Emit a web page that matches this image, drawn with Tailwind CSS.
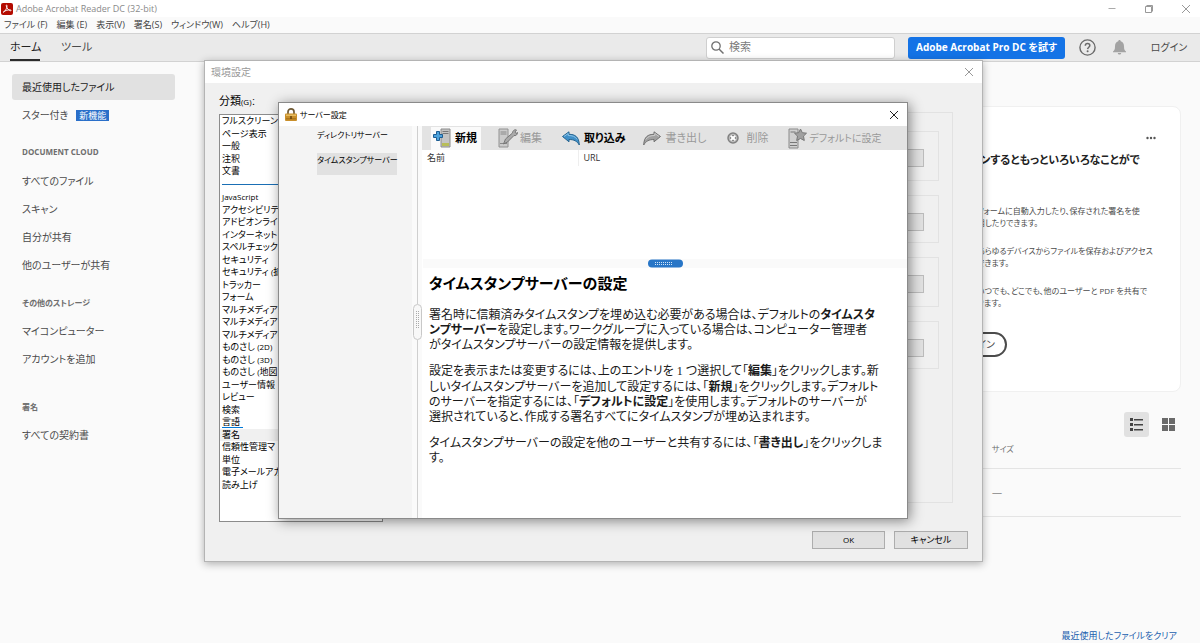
<!DOCTYPE html>
<html lang="ja">
<head>
<meta charset="utf-8">
<meta name="viewport" content="width=device-width, initial-scale=1">
<title>Adobe Acrobat Reader DC (32-bit)</title>
<script src="https://cdn.jsdelivr.net/npm/@tailwindcss/browser@4"></script>
</head>
<body class="relative flex h-screen flex-col overflow-hidden bg-[#fafafa] font-['Open_Sans','Noto_Sans_CJK_JP',sans-serif] text-[10px] whitespace-nowrap text-[#4b4b4b] [font-feature-settings:'palt']">

<!-- Title bar -->
<header class="flex h-[17px] shrink-0 items-center bg-white text-[9px] text-[#8a8a8a]">
  <svg class="ml-px h-3 w-3" viewBox="0 0 12 12" aria-hidden="true"><rect width="12" height="12" rx="2" fill="#b30b00"/><path d="M2.2 9.2C3.2 9.6 6.4 5 6 2.6c-.2-1-1-.6-.8.2C5.600 5 8 7.800 9.600 7.800c1 0 .6-1-.6-1C7 6.800 3 7.800 2.200 9.200Z" fill="none" stroke="#fff" stroke-width=".9"/></svg>
  <span class="ml-[3px] flex-1">Adobe Acrobat Reader DC (32-bit)</span>
  <button class="flex h-full w-7 items-center justify-center" aria-label="最小化"><svg class="h-2 w-2" viewBox="0 0 8 8"><path d="M.5 3.500h7" stroke="#aaa"/></svg></button>
  <button class="flex h-full w-[46px] items-center justify-center" aria-label="元に戻す"><svg class="h-2 w-2" viewBox="0 0 8 8"><path d="M.5 1.500h6v6h-6zM1.500 .5h6v6" fill="none" stroke="#999"/></svg></button>
  <button class="flex h-full w-7 items-center justify-center" aria-label="閉じる"><svg class="h-2 w-2" viewBox="0 0 8 8"><path d="M0 0l8 8M8 0L0 8" stroke="#999"/></svg></button>
</header>

<!-- Menu bar -->
<nav class="flex h-4 shrink-0 items-center gap-[9px] bg-[#fafafa] pl-1 text-[9px] text-[#444]" aria-label="メニュー">
  <button>ファイル (F)</button><button>編集 (E)</button><button>表示(V)</button><button>署名(S)</button><button>ウィンドウ(W)</button><button>ヘルプ(H)</button>
</nav>

<!-- Application toolbar -->
<div class="flex h-[29px] shrink-0 items-center border-y border-[#d2d2d2] bg-[#eaeaea] pl-[10px] text-[11px]">
  <button class="h-full w-[30px] border-b-2 border-[#2c2c2c] pt-[2px] text-[#222]">ホーム</button>
  <button class="ml-[21px] h-full w-[30px]">ツール</button>
  <label class="ml-auto flex h-[22px] w-[189px] items-center rounded-[3px] border border-[#cfcfcf] bg-white pl-1">
    <svg class="h-[13px] w-[13px] shrink-0" viewBox="0 0 13 13" aria-hidden="true"><circle cx="5" cy="5" r="4.200" fill="none" stroke="#707070" stroke-width="1.300"/><path d="M8 8l4.500 4.500" stroke="#707070" stroke-width="1.500"/></svg>
    <input class="ml-[5px] w-full min-w-0 bg-transparent text-[11px] outline-none placeholder:text-[#7b7b7b]" type="text" placeholder="検索" aria-label="検索">
  </label>
  <button class="ml-[13px] h-[22px] w-[157px] rounded-[3px] bg-[#1473e6] text-[10px] font-bold text-white">Adobe Acrobat Pro DC を試す</button>
  <button class="ml-[14px]" aria-label="ヘルプ"><svg class="h-[17px] w-[17px]" viewBox="0 0 17 17"><circle cx="8.500" cy="8.500" r="7.600" fill="none" stroke="#6a6a6a" stroke-width="1.400"/><path d="M6.300 6.700c0-3 4.500-2.800 4.500-.2 0 1.700-2.100 1.700-2.200 3.600" fill="none" stroke="#6a6a6a" stroke-width="1.500"/><circle cx="8.600" cy="12.300" r="1" fill="#6a6a6a"/></svg></button>
  <button class="ml-[17px]" aria-label="通知"><svg class="h-[15px] w-[13px]" viewBox="0 0 13 15"><path d="M6.500 0c.8 0 1.200.6 1.200 1.300 2.500.7 3.300 2.700 3.300 5.200 0 3 .7 3.800 2 5v.8H0v-.8c1.300-1.200 2-2 2-5 0-2.500.8-4.500 3.300-5.200C5.300.6 5.700 0 6.500 0ZM4.800 13h3.400c-.2 2-3.200 2-3.400 0Z" fill="#a3a3a3"/></svg></button>
  <button class="mr-3 ml-6 w-[38px] text-[10px]">ログイン</button>
</div>

<div class="flex min-h-0 flex-1">
  <!-- Sidebar -->
  <nav class="w-[195px] shrink-0 pt-3 pl-3" aria-label="ホーム">
    <a href="#" class="flex h-[26px] w-[163px] items-center rounded-[3px] bg-[#e1e1e1] pl-[10px] text-[#222]">最近使用したファイル</a>
    <a href="#" class="mt-px flex h-7 items-center pl-[10px]">スター付き<span class="ml-2 w-[33px] bg-[#2a6fc9] text-center text-[9px] leading-[11px] text-white">新機能</span></a>
    <h2 class="mt-[9px] mb-px flex h-7 items-center pl-[10px] text-[8px] font-bold text-[#6e6e6e]">DOCUMENT CLOUD</h2>
    <a href="#" class="flex h-7 items-center pl-[10px]">すべてのファイル</a>
    <a href="#" class="flex h-7 items-center pl-[10px]">スキャン</a>
    <a href="#" class="flex h-7 items-center pl-[10px]">自分が共有</a>
    <a href="#" class="flex h-7 items-center pl-[10px]">他のユーザーが共有</a>
    <h2 class="mt-[10px] flex h-7 items-center pl-[10px] text-[8px] font-bold text-[#6e6e6e]">その他のストレージ</h2>
    <a href="#" class="flex h-7 items-center pl-[10px]">マイコンピューター</a>
    <a href="#" class="flex h-7 items-center pl-[10px]">アカウントを追加</a>
    <h2 class="mt-5 flex h-7 items-center pl-[10px] text-[8px] font-bold text-[#6e6e6e]">署名</h2>
    <a href="#" class="flex h-7 items-center pl-[10px]">すべての契約書</a>
  </nav>

  <!-- Home content -->
  <main class="flex min-w-0 flex-1 flex-col items-end pt-[44px] pr-[19px] pl-5">
    <section class="flex h-[286px] w-full shrink-0 justify-end rounded-lg border border-[#f0f0f0] bg-white pt-[27px]">
      <div class="flex w-[240px] flex-col">
        <button class="mr-[23px] self-end" aria-label="その他"><svg class="h-2 w-[12px]" viewBox="0 0 12 8"><g fill="#555"><circle cx="2.500" cy="4" r="1.200"/><circle cx="6" cy="4" r="1.200"/><circle cx="9.500" cy="4" r="1.200"/></g></svg></button>
        <h2 class="mt-2 text-[11px] leading-5 font-bold text-[#222]">サインインするともっといろいろなことがで<br>きます。</h2>
        <div class="ml-[37px] flex flex-col gap-4 pt-[15px] text-[8px] leading-3">
          <p>フォームに自動入力したり、保存された署名を使<br>用したりできます。</p>
          <p>あらゆるデバイスからファイルを保存およびアクセス<br>できます。</p>
          <p>いつでも、どこでも、他のユーザーと PDF を共有で<br>きます。</p>
        </div>
        <button class="mt-[23px] h-[25px] w-[67px] rounded-full border-2 border-[#4b4b4b] pr-[10px] text-right text-[10px]">サインイン</button>
      </div>
    </section>
    <div class="mt-5 flex items-center gap-[13px] pr-[6px]">
      <button class="flex h-[25px] w-[25px] items-center justify-center rounded-[3px] bg-[#e1e1e1]" aria-label="リスト表示"><svg class="h-[13px] w-[13px]" viewBox="0 0 13 13"><path d="M0 0h3v3H0zM0 5h3v3H0zM0 10h3v3H0zM4 1h9v1.500H4zM4 6h9v1.500H4zM4 11h9v1.500H4z" fill="#444"/></svg></button>
      <button aria-label="サムネール表示"><svg class="h-[13px] w-[13px]" viewBox="0 0 13 13"><path d="M0 0h6v6H0zM7 0h6v6H7zM0 7h6v6H0zM7 7h6v6H7z" fill="#6a6a6a"/></svg></button>
    </div>
    <table class="w-full border-collapse text-left text-[8px] text-[#6e6e6e]">
      <thead><tr class="h-[31px] border-b border-[#e4e4e4]"><th class="w-full"></th><th class="min-w-[189px] pb-[6px] font-normal">サイズ</th></tr></thead>
      <tbody><tr class="h-[48px] border-b border-[#e4e4e4]"><td></td><td class="text-[10px] text-[#999]">—</td></tr></tbody>
    </table>
    <a href="#" class="mt-auto mr-1 text-[9px] leading-[15px] text-[#1b5fae]">最近使用したファイルをクリア</a>
  </main>
</div>

<!-- Preferences window -->
<section role="dialog" aria-labelledby="prefs-title" class="absolute top-[60px] left-[204px] flex h-[502px] w-[779px] flex-col border border-[#b4b4b4] bg-[#f0f0f0] text-black shadow-[0_2px_8px_rgba(0,0,0,0.3)]">
  <div class="flex h-[22px] shrink-0 items-center justify-between bg-white pr-[9px] pl-[6px]">
    <h1 id="prefs-title" class="text-[10px] text-[#999]">環境設定</h1>
    <button aria-label="閉じる"><svg class="h-2 w-2" viewBox="0 0 8 8"><path d="M0 0l8 8M8 0L0 8" stroke="#999"/></svg></button>
  </div>
  <div class="flex min-h-0 flex-1 justify-between pt-[10px] pr-[29px] pl-[14px]">
    <div>
      <h2 id="category" class="h-[21px] text-[11px] leading-4">分類<span class="text-[8px]">(G)：</span></h2>
      <div role="listbox" aria-labelledby="category" class="h-[408px] w-[164px] overflow-hidden border border-[#8c8c8c] bg-white text-[9px] leading-3">
        <ul class="grid h-[63px] auto-rows-fr pl-[2px]">
          <li>フルスクリーンモ</li><li>ページ表示</li><li>一般</li><li>注釈</li><li>文書</li>
        </ul>
        <div class="mt-[6px] ml-[2px] h-px bg-[#1a6fb5]"></div>
        <ul class="mt-[6px] grid h-[300px] auto-rows-fr [&>li]:pl-[2px]">
          <li class="text-[8px]">JavaScript</li><li>アクセシビリティ</li><li>アドビオンライン</li><li>インターネット</li><li>スペルチェック</li><li>セキュリティ</li><li>セキュリティ <span class="text-[8px]">(</span>拡</li><li>トラッカー</li><li>フォーム</li><li>マルチメディア <span class="text-[8px]">(</span></li><li>マルチメディアと</li><li>マルチメディアの</li>
          <li>ものさし <span class="text-[8px]">(2D)</span></li><li>ものさし <span class="text-[8px]">(3D)</span></li><li>ものさし <span class="text-[8px]">(</span>地図</li><li>ユーザー情報</li><li>レビュー</li><li>検索</li><li><span class="block h-3 w-[21px] border-b border-[#0078d7]">言語</span></li><li class="bg-[#f0f0f0]">署名</li><li>信頼性管理マ</li><li>単位</li><li>電子メールアカ</li><li>読み上げ</li>
        </ul>
      </div>
    </div>
    <div class="mt-[19px] flex h-[391px] w-[540px] flex-col gap-[14px] border border-[#e2e2e2] px-[13px] pt-[18px]">
      <div class="flex h-[50px] items-center justify-end border border-[#e2e2e2] pt-[3px] pr-[14px]"><button class="h-[18px] w-[70px] border border-[#bcbcbc] bg-[#e1e1e1]" aria-label="詳細"></button></div>
      <div class="flex h-12 items-center justify-end border border-[#e2e2e2] pt-[5px] pr-[14px]"><button class="h-[18px] w-[70px] border border-[#bcbcbc] bg-[#e1e1e1]" aria-label="詳細"></button></div>
      <div class="flex h-[50px] items-center justify-end border border-[#e2e2e2] pt-[3px] pr-[14px]"><button class="h-[18px] w-[70px] border border-[#bcbcbc] bg-[#e1e1e1]" aria-label="詳細"></button></div>
      <div class="flex h-12 items-center justify-end border border-[#e2e2e2] pt-[5px] pr-[14px]"><button class="h-[18px] w-[70px] border border-[#bcbcbc] bg-[#e1e1e1]" aria-label="詳細"></button></div>
    </div>
  </div>
  <div class="flex shrink-0 justify-end gap-[9px] pr-[14px] pb-3">
    <button class="h-[18px] w-[73px] border border-[#adadad] bg-[#e1e1e1] text-[8px] leading-4">OK</button>
    <button class="h-[18px] w-[74px] border border-[#adadad] bg-[#e1e1e1] text-[9px] leading-4">キャンセル</button>
  </div>
</section>

<!-- Server settings window -->
<section role="dialog" aria-labelledby="server-title" class="absolute top-[102px] left-[278px] flex h-[417px] w-[630px] flex-col border border-[#8a8a8a] bg-white text-black shadow-[2px_2px_12px_rgba(0,0,0,0.45)]">
  <div class="flex h-[23px] shrink-0 items-center pr-[9px] pl-[6px]">
    <svg class="h-[13px] w-3" viewBox="0 0 12 13" aria-hidden="true"><path d="M3 6V3.700C3 0 9 0 9 3.700V6" fill="none" stroke="#6f5a36" stroke-width="1.700"/><rect y="5.500" width="12" height="7.500" rx="1" fill="#c98f2b"/><path d="M1 6.500h10v1.500H1z" fill="#e7bd62"/><path d="M1 10.800h10" stroke="#a06d18"/><path d="M5.300 8h1.400v3H5.300z" fill="#5d3d0a"/></svg>
    <h1 id="server-title" class="ml-[3px] flex-1 text-[8px]">サーバー設定</h1>
    <button aria-label="閉じる"><svg class="h-2 w-2" viewBox="0 0 8 8"><path d="M0 0l8 8M8 0L0 8" stroke="#222"/></svg></button>
  </div>
  <div class="flex min-h-0 flex-1">
    <ul class="w-[133px] shrink-0 bg-[#f4f4f4] pl-[38px] text-[8px]">
      <li class="h-[27px] leading-[18px]">ディレクトリサーバー</li>
      <li class="h-[22px] w-[80px] bg-[#e1e1e1] leading-[14px]">タイムスタンプサーバー</li>
    </ul>
    <div class="flex w-[10px] shrink-0 flex-col items-center bg-[#fafafa]" role="separator">
      <div class="h-[178px] w-px bg-[#cfcfcf]"></div>
      <svg class="h-9 w-[9px]" viewBox="0 0 9 36" aria-hidden="true"><rect x=".5" y=".5" width="8" height="35" rx="4" fill="#f8f8f8" stroke="#c8c8c8"/><path d="M3.500 7v18M5.500 7v18" stroke="#aaa" stroke-dasharray="1 1"/></svg>
      <div class="w-px flex-1 bg-[#cfcfcf]"></div>
    </div>
    <div class="flex min-w-0 flex-1 flex-col">
      <div class="flex h-6 shrink-0 items-center bg-[#e3e3e3] pl-[9px] text-[11px] leading-6 text-[#999]" role="toolbar">
        <button class="flex h-[23px] w-[50px] items-center gap-1 bg-[#fafafa] pl-[2px] font-bold text-black">
          <svg class="h-5 w-[18px] shrink-0" viewBox="0 0 18 20"><path d="M8 1h9v18H8z" fill="#c4c4c4" stroke="#8a8a8a"/><path d="M9.500 3.500h6M9.500 5.500h6" stroke="#777"/><path d="M9 15h7v3H9z" fill="#b8bd58"/><path d="M3.500 3.500h3v3h3v3h-3v3h-3v-3h-3v-3h3z" fill="#4da3dc" stroke="#1d5c92"/></svg>新規</button>
        <button class="ml-[17px] flex h-full items-center gap-[2px]" disabled>
          <svg class="h-5 w-5 shrink-0" viewBox="0 0 20 20"><path d="M1 1h9v18H1z" fill="#cbcbcb" stroke="#929292"/><path d="M2.500 4h6M2.500 6h6M2 15.500h7" stroke="#888"/><path d="M5.500 16l2-5 7-6c0-2 2-4 4-3l-1.500 2 1 1.500 1.500-1c0 2.500-2 3.500-3.500 3L9.500 14z" fill="#aaa" stroke="#777"/></svg>編集</button>
        <button class="ml-5 flex h-full items-center gap-1 font-bold text-black">
          <svg class="h-[15px] w-[18px] shrink-0" viewBox="0 0 18 15"><path d="M.5 5.500L7 .8v2.500c6 0 10 2.500 10.300 10.700C15 10 12 8.500 7 8.500v2.300z" fill="#3f8fc7" stroke="#25638f"/><path d="M2 5.500L6.200 2.500v2c4 0 7 .8 9 4" fill="none" stroke="#8cc4e8"/></svg>取り込み</button>
        <button class="ml-[18px] flex h-full items-center gap-1" disabled>
          <svg class="h-[15px] w-[18px] shrink-0" viewBox="0 0 18 15"><path d="M17.500 5.500L11 .8v2.500C5 3.300 1 5.800.7 14 3 10 6 8.500 11 8.500v2.300z" fill="#a0a0a0" stroke="#727272"/><path d="M16 5.500l-4.200-3v2c-4 0-7 .8-9 4" fill="none" stroke="#ccc"/></svg>書き出し</button>
        <button class="ml-[21px] flex h-full items-center gap-[7px]" disabled>
          <svg class="h-3 w-3 shrink-0" viewBox="0 0 12 12"><circle cx="6" cy="6" r="5" fill="#c4c4c4" stroke="#808080" stroke-width="1.500"/><path d="M3.700 3.700l4.600 4.600M8.300 3.700L3.700 8.300" stroke="#777" stroke-width="3.500"/><path d="M3.700 3.700l4.600 4.600M8.300 3.700L3.700 8.300" stroke="#fff" stroke-width="2"/></svg>削除</button>
        <button class="ml-5 flex h-full items-center gap-[2px] text-[10px]" disabled>
          <svg class="h-[21px] w-[19px] shrink-0" viewBox="0 0 19 21"><path d="M1 1h9v19H1z" fill="#d0d0d0" stroke="#8a8a8a"/><path d="M2.500 4h5M2 14.500h7M2 17.500h7" stroke="#777"/><path d="M12.500 1l1.800 3.700 4.200.5-3 2.900.8 4.400-3.800-2-3.800 2 .8-4.400-3-2.900 4.200-.5z" fill="#a0a0a0" stroke="#777"/></svg>デフォルトに設定</button>
      </div>
      <table class="w-full text-left text-[9px] leading-4 text-[#333]">
        <thead><tr><th class="w-[156px] border-r border-[#eee] pl-[5px] font-normal">名前</th><th class="pl-[5px] font-normal">URL</th></tr></thead>
      </table>
      <div class="mt-[93px] ml-px flex h-[9px] shrink-0 items-center justify-center bg-[#fafafa]" role="separator">
        <svg class="h-[9px] w-[35px]" viewBox="0 0 35 9" aria-hidden="true"><rect y=".5" width="35" height="8" rx="4" fill="#2876c7"/><path d="M7 3.500h18M7 5.500h18" stroke="#cfe4f8" stroke-dasharray="1 1"/></svg>
      </div>
      <article class="flex flex-col gap-[11px] pt-[3px] pl-[7px] text-[12px] leading-[15px] text-[#1a1a1a]">
        <h2 class="text-[15px] leading-[25px] font-bold text-black">タイムスタンプサーバーの設定</h2>
        <p>署名時に信頼済みタイムスタンプを埋め込む必要がある場合は、デフォルトの<b>タイムスタ<br>ンプサーバー</b>を設定します。ワークグループに入っている場合は、コンピューター管理者<br>がタイムスタンプサーバーの設定情報を提供します。</p>
        <p>設定を表示または変更するには、上のエントリを <span class="font-['Liberation_Serif',serif]">1</span> つ選択して「<b>編集</b>」をクリックします。新<br>しいタイムスタンプサーバーを追加して設定するには、「<b>新規</b>」をクリックします。デフォルト<br>のサーバーを指定するには、「<b>デフォルトに設定</b>」を使用します。デフォルトのサーバーが<br>選択されていると、作成する署名すべてにタイムスタンプが埋め込まれます。</p>
        <p>タイムスタンプサーバーの設定を他のユーザーと共有するには、「<b>書き出し</b>」をクリックしま<br>す。</p>
      </article>
    </div>
  </div>
</section>
</body>
</html>
